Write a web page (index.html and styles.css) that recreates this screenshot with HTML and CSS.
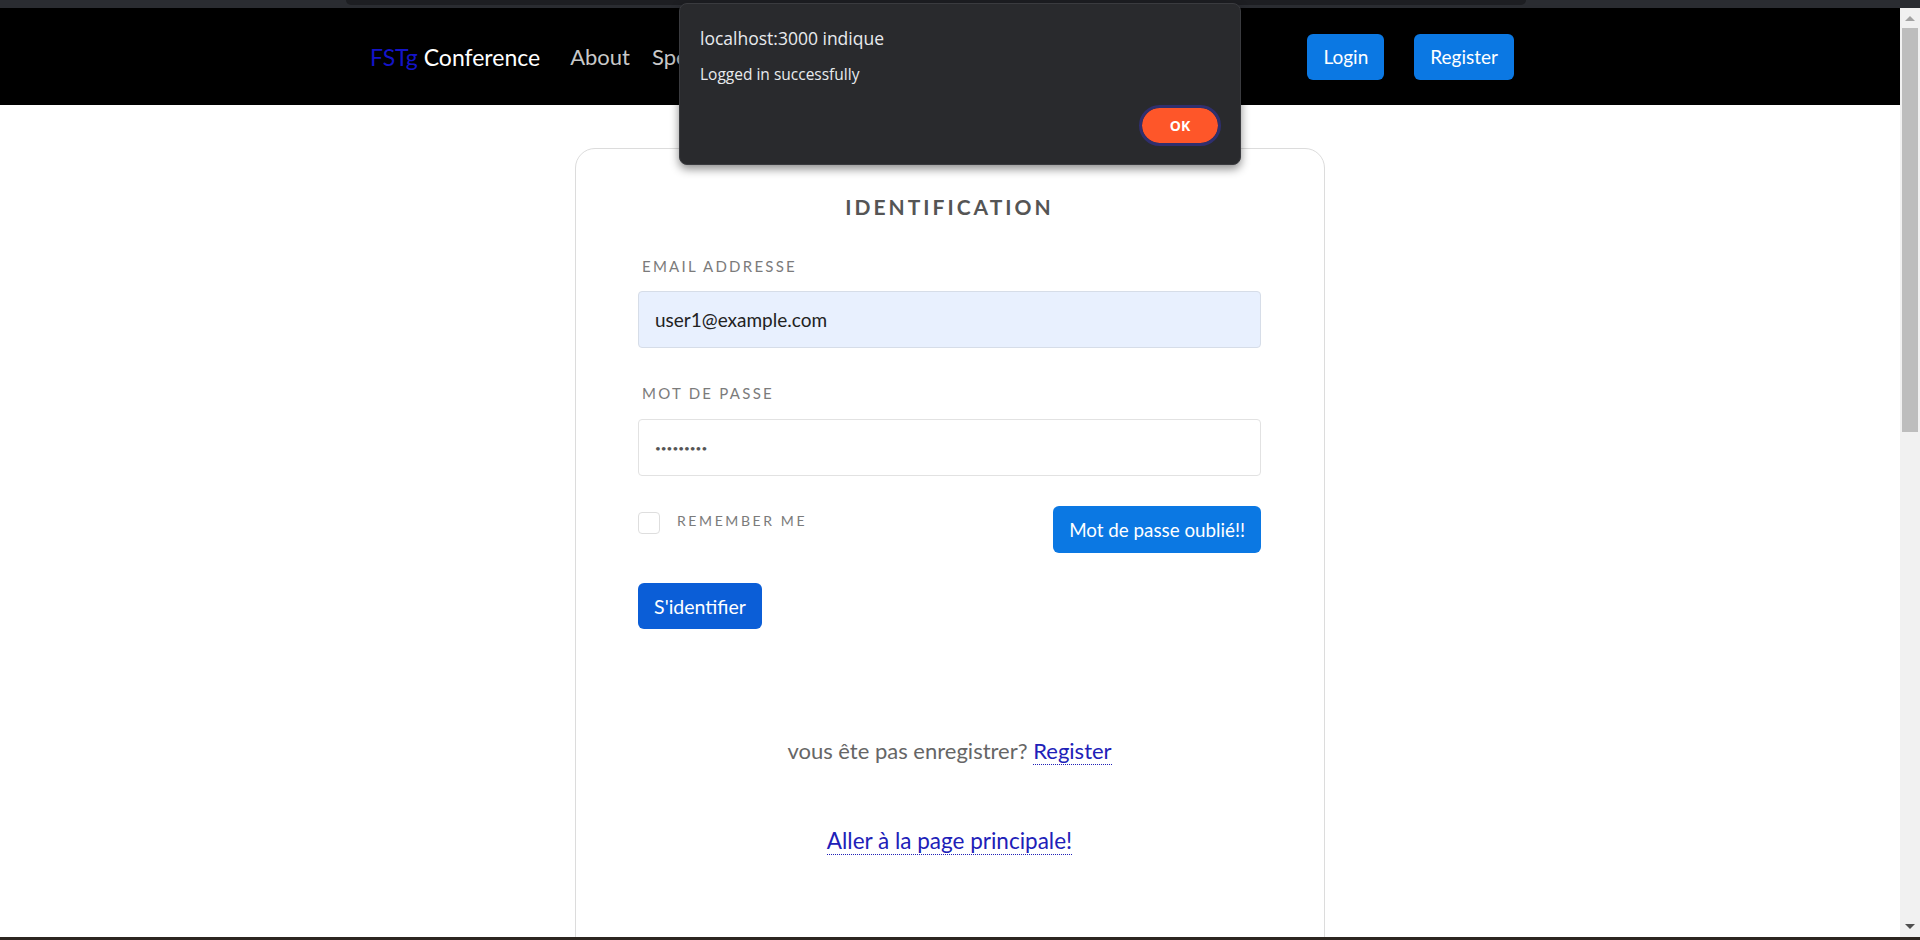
FILE: index.html
```html
<!DOCTYPE html>
<html lang="fr">
<head>
<meta charset="utf-8">
<title>Login</title>
<link rel="stylesheet" href="styles.css">
</head>
<body>
<div class="screen">
  <div class="chrome-top"><div class="chrome-tab"></div></div>
  <div class="viewport">
    <div class="page">
      <nav class="navbar">
        <a class="brand" href="#"><span class="brand-accent">FSTg</span> Conference</a>
        <ul class="nav-links">
          <li><a href="#">About</a></li>
          <li><a href="#">Speakers</a></li>
        </ul>
        <div class="nav-actions">
          <button class="nav-btn">Login</button>
          <button class="nav-btn">Register</button>
        </div>
      </nav>
      <main class="main">
        <section class="card">
          <h1 class="card-title">IDENTIFICATION</h1>
          <label class="field-label">EMAIL ADDRESSE</label>
          <div class="input input-filled">user1@example.com</div>
          <label class="field-label field-label-2">MOT DE PASSE</label>
          <div class="input input-pass">•••••••••</div>
          <div class="row">
            <div class="remember">
              <span class="checkbox"></span>
              <span class="remember-text">REMEMBER ME</span>
            </div>
            <button class="btn-forgot">Mot de passe oublié!!</button>
          </div>
          <button class="btn-submit">S'identifier</button>
          <p class="register-line">vous ête pas enregistrer? <a class="link" href="#">Register</a></p>
          <p class="home-line"><a class="link" href="#">Aller à la page principale!</a></p>
        </section>
      </main>
    </div>
    <div class="scrollbar">
      <div class="sb-arrow sb-up"></div>
      <div class="sb-track"><div class="sb-thumb"></div></div>
      <div class="sb-arrow sb-down"></div>
    </div>
  </div>
  <div class="chrome-bottom"></div>

  <div class="alert">
    <div class="alert-title">localhost:3000 indique</div>
    <div class="alert-msg">Logged in successfully</div>
    <div class="alert-actions"><button class="alert-ok">OK</button></div>
  </div>
</div>
</body>
</html>
```
FILE: styles.css
```css
* { box-sizing: border-box; }
html, body { margin: 0; padding: 0; }
body {
  width: 1920px;
  height: 940px;
  overflow: hidden;
  font-family: Lato, "Noto Sans", sans-serif;
  background: #fff;
}
.screen {
  position: relative;
  width: 1920px;
  height: 940px;
  display: flex;
  flex-direction: column;
}
.chrome-top {
  height: 8px;
  background: #2a2c31;
  padding-left: 346px;
}
.chrome-tab {
  width: 1180px;
  height: 5px;
  background: #1d1e22;
  border-radius: 0 0 6px 6px;
}
.viewport {
  height: 929px;
  display: flex;
  overflow: hidden;
}
.page {
  flex: 1;
  background: #fff;
  overflow: hidden;
}
.chrome-bottom {
  height: 3px;
  background: #2d2620;
}

/* navbar */
.navbar {
  height: 97px;
  background: #000;
  display: flex;
  align-items: center;
  padding: 0 386px 0 370px;
}
.brand {
  font-size: 23px;
  color: #fff;
  text-decoration: none;
  margin-right: 30px;
  white-space: nowrap;
}
.brand-accent { color: #1414c8; }
.nav-links {
  list-style: none;
  margin: 0;
  padding: 0;
  display: flex;
  gap: 22px;
}
.nav-links a {
  color: #c8c8c8;
  text-decoration: none;
  font-size: 22px;
}
.nav-actions {
  margin-left: auto;
  display: flex;
  gap: 30px;
}
.nav-btn {
  height: 46px;
  padding: 0 16px;
  border: 0;
  border-radius: 6px;
  background: #0b78e3;
  color: #fff;
  font-family: Lato, sans-serif;
  font-size: 19px;
}

/* card */
.main {
  display: flex;
  justify-content: center;
  padding-top: 43px;
}
.card {
  width: 750px;
  height: 900px;
  border: 1px solid #dcdcdc;
  border-radius: 20px;
  padding: 44px 63px 0 62px;
  display: flex;
  flex-direction: column;
  align-items: flex-start;
}
.card-title {
  align-self: stretch;
  margin: 0;
  text-align: center;
  font-size: 21px;
  line-height: 28px;
  font-weight: 700;
  letter-spacing: 3px;
  color: #555;
}
.field-label {
  margin-top: 35px;
  padding-left: 4px;
  font-size: 15px;
  line-height: 20px;
  letter-spacing: 2.25px;
  color: #7b7b7b;
}
.field-label-2 { margin-top: 35px; }
.input {
  align-self: stretch;
  margin-top: 15px;
  height: 57px;
  border: 1px solid #e2e2e2;
  border-radius: 4px;
  display: flex;
  align-items: center;
  padding-left: 16px;
  font-size: 19px;
  color: #222;
}
.input-filled { background: #e8f0fe; border-color: #d6dde8; }
.input-pass { margin-top: 16px; font-size: 10px; color: #555; letter-spacing: 0; }

.row {
  align-self: stretch;
  margin-top: 30px;
  display: flex;
  justify-content: space-between;
  align-items: flex-start;
}
.remember {
  display: flex;
  align-items: center;
  gap: 17px;
  margin-top: 6px;
}
.checkbox {
  width: 22px;
  height: 22px;
  border: 1px solid #dedede;
  border-radius: 4px;
}
.remember-text {
  font-size: 14px;
  letter-spacing: 2.6px;
  color: #7b7b7b;
  margin-top: -6px;
}
.btn-forgot {
  height: 47px;
  padding: 0 16px;
  border: 0;
  border-radius: 6px;
  background: #0b78e3;
  color: #fff;
  font-family: Lato, sans-serif;
  font-size: 18.8px;
}
.btn-submit {
  margin-top: 30px;
  height: 46px;
  width: 124px;
  border: 0;
  border-radius: 6px;
  background: #0b5ed7;
  color: #fff;
  font-family: Lato, sans-serif;
  font-size: 19.5px;
}
.register-line {
  align-self: stretch;
  text-align: center;
  margin: 109px 0 0;
  font-size: 22px;
  line-height: 26px;
  color: #666;
}
.home-line {
  align-self: stretch;
  text-align: center;
  margin: 64px 0 0;
  font-size: 22.5px;
  line-height: 26px;
}
.link {
  color: #2020b8;
  text-decoration: none;
  border-bottom: 1px dotted #2020b8;
}

/* scrollbar */
.scrollbar {
  width: 20px;
  background: #f1f1f1;
  display: flex;
  flex-direction: column;
  align-items: center;
}
.sb-arrow {
  width: 0;
  height: 0;
  border-left: 5px solid transparent;
  border-right: 5px solid transparent;
}
.sb-up { margin-top: 8px; border-bottom: 5px solid #a3a3a3; }
.sb-down { margin-bottom: 8px; border-top: 5px solid #505050; }
.sb-track {
  flex: 1;
  width: 100%;
  padding: 7px 2px 0;
}
.sb-thumb {
  height: 404px;
  background: #bdbdbd;
}

/* alert dialog */
.alert {
  position: absolute;
  left: 679px;
  top: 3px;
  width: 562px;
  height: 162px;
  background: #292a2d;
  border: 1px solid #3a3b3f;
  border-radius: 8px;
  box-shadow: 0 4px 10px rgba(0, 0, 0, 0.45);
  padding: 23px 20px 0 20px;
  font-family: "Open Sans", "Noto Sans", sans-serif;
  color: #e8eaed;
}
.alert-title {
  font-size: 17.5px;
  line-height: 22px;
}
.alert-msg {
  margin-top: 15px;
  font-size: 15.5px;
  line-height: 20px;
}
.alert-actions {
  display: flex;
  justify-content: flex-end;
  margin-top: 24px;
}
.alert-ok {
  width: 76px;
  height: 35px;
  border: 0;
  border-radius: 18px;
  background: #fe5629;
  color: #fff;
  font-family: "Open Sans", sans-serif;
  font-weight: 700;
  font-size: 14px;
  margin-right: 2px;
  outline: 3px solid #2f2f6e;
  outline-offset: 0;
}
```
